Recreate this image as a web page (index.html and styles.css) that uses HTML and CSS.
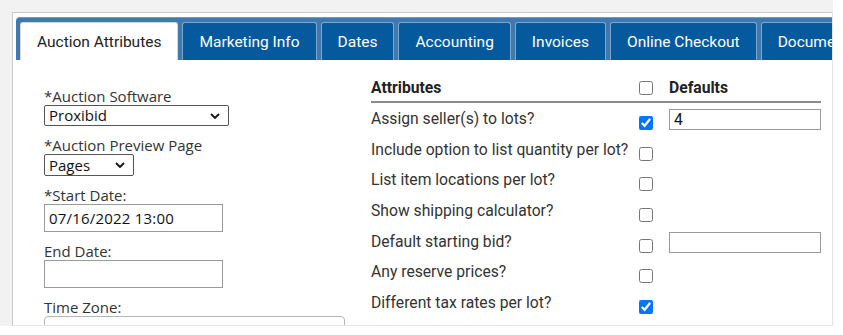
FILE: index.html
```html
<!DOCTYPE html>
<html lang="en">
<head>
<meta charset="utf-8">
<title>Auction Attributes</title>
<link rel="stylesheet" href="styles.css">
</head>
<body>
<div class="page">
  <div class="panel">
    <ul class="tabs">
      <li class="tab active">Auction Attributes</li>
      <li class="tab">Marketing Info</li>
      <li class="tab">Dates</li>
      <li class="tab">Accounting</li>
      <li class="tab">Invoices</li>
      <li class="tab">Online Checkout</li>
      <li class="tab">Documents</li>
    </ul>
    <div class="content">
      <div class="fields">
        <label class="lbl">*Auction Software</label>
        <span class="sel sel-software">
          <select><option>Proxibid</option></select>
          <svg class="chev" viewBox="0 0 10 6" width="10" height="6"><path d="M1 1l4 4 4-4" fill="none" stroke="#111" stroke-width="1.8"/></svg>
        </span>
        <label class="lbl">*Auction Preview Page</label>
        <span class="sel sel-pages">
          <select><option>Pages</option></select>
          <svg class="chev" viewBox="0 0 10 6" width="10" height="6"><path d="M1 1l4 4 4-4" fill="none" stroke="#111" stroke-width="1.8"/></svg>
        </span>
        <label class="lbl">*Start Date:</label>
        <input class="txt" type="text" value="07/16/2022 13:00">
        <label class="lbl">End Date:</label>
        <input class="txt" type="text" value="">
        <label class="lbl">Time Zone:</label>
        <div class="tz"></div>
      </div>
      <div class="attrs">
        <div class="row head">
          <span>Attributes</span>
          <input class="cb" type="checkbox">
          <span>Defaults</span>
        </div>
        <div class="row">
          <span class="q">Assign seller(s) to lots?</span>
          <input class="cb" type="checkbox" checked>
          <input class="def" type="text" value="4">
        </div>
        <div class="row">
          <span class="q">Include option to list quantity per lot?</span>
          <input class="cb" type="checkbox">
        </div>
        <div class="row">
          <span class="q">List item locations per lot?</span>
          <input class="cb" type="checkbox">
        </div>
        <div class="row">
          <span class="q">Show shipping calculator?</span>
          <input class="cb" type="checkbox">
        </div>
        <div class="row">
          <span class="q">Default starting bid?</span>
          <input class="cb" type="checkbox">
          <input class="def" type="text" value="">
        </div>
        <div class="row">
          <span class="q">Any reserve prices?</span>
          <input class="cb" type="checkbox">
        </div>
        <div class="row">
          <span class="q">Different tax rates per lot?</span>
          <input class="cb" type="checkbox" checked>
        </div>
      </div>
    </div>
  </div>
</div>
</body>
</html>
```
FILE: styles.css
```css
html, body {
  margin: 0;
  padding: 0;
  background: #fff;
}

.page {
  width: 833px;
  height: 326px;
  box-sizing: border-box;
  padding: 12px 0 0 12px;
  background: #f2f2f2;
}

.panel {
  height: 100%;
  box-sizing: border-box;
  background: #fff;
  border: 1px solid #c9c9c9;
  border-right-color: #e4e4e4;
  border-bottom-color: #e4e4e4;
  overflow: hidden;
}

.tabs {
  list-style: none;
  display: flex;
  gap: 4px;
  height: 43px;
  box-sizing: border-box;
  margin: 4px 0 0 3px;
  padding: 5px 0 0 4px;
  background: #3f79ad;
  border-top: 1px solid #6f9cc6;
  border-radius: 4px 0 0 0;
  overflow: hidden;
  font-family: Roboto, "Liberation Sans", sans-serif;
}

.tab {
  flex: none;
  display: flex;
  align-items: center;
  height: 38px;
  box-sizing: border-box;
  margin-top: -1px;
  padding: 0 16px;
  border: 1px solid #7fa7cc;
  border-bottom: 0;
  border-radius: 3px 3px 0 0;
  background: #045a9d;
  color: #fff;
  font-size: 15.5px;
}

.tab.active {
  background: #fff;
  color: #222;
  border-color: #d6d6d6;
}

.content {
  display: flex;
  align-items: flex-start;
  gap: 27px;
  padding-left: 31px;
}

.fields {
  width: 300px;
  flex: none;
  margin-top: 27px;
  display: flex;
  flex-direction: column;
  align-items: flex-start;
  font-family: "Open Sans", "Noto Sans", sans-serif;
  color: #333;
}

.lbl {
  display: block;
  font-size: 15px;
  line-height: 18px;
  margin-top: 10px;
}

.lbl:first-child {
  margin-top: 0;
}

.sel {
  position: relative;
  display: block;
}

.sel select {
  appearance: none;
  -webkit-appearance: none;
  display: block;
  margin: 0;
  padding: 0 0 0 4px;
  border: 1px solid #555;
  border-radius: 2px;
  background: #fff;
  color: #111;
  font-family: "Open Sans", "Noto Sans", sans-serif;
  font-size: 15px;
  box-sizing: border-box;
}

.sel-software select {
  width: 185px;
  height: 21px;
  line-height: 19px;
}

.sel-pages select {
  width: 90px;
  height: 22px;
  line-height: 20px;
}

.chev {
  position: absolute;
  right: 9px;
  top: 50%;
  margin-top: -3px;
}

.txt {
  display: block;
  width: 179px;
  height: 28px;
  box-sizing: border-box;
  margin: 0;
  padding: 0 4px;
  border: 1px solid #9a9a9a;
  border-radius: 0;
  font-family: "Open Sans", "Noto Sans", sans-serif;
  font-size: 15px;
  letter-spacing: 0.2px;
  color: #111;
}

.tz {
  width: 301px;
  height: 30px;
  box-sizing: border-box;
  border: 1px solid #b5b5b5;
  border-radius: 4px;
}

.attrs {
  margin-top: 14px;
  font-family: Roboto, "Liberation Sans", sans-serif;
  font-size: 15.7px;
  color: #333;
}

.row {
  display: grid;
  grid-template-columns: 268px 30px 152px;
  align-items: start;
  height: 30.67px;
}

.row.head {
  height: 29px;
  box-sizing: border-box;
  align-items: center;
  border-bottom: 2px solid #8c8c8c;
  font-weight: bold;
  color: #222;
}

.q {
  padding-top: 6px;
  line-height: 20px;
  white-space: nowrap;
}

.cb {
  width: 14px;
  height: 14px;
  margin: 13px 0 0 0;
}

.row.head .cb {
  margin: 0;
}

.def {
  width: 152px;
  height: 21px;
  box-sizing: border-box;
  margin: 6px 0 0 0;
  padding: 0 4px;
  border: 1px solid #999;
  font-family: Roboto, "Liberation Sans", sans-serif;
  font-size: 15.7px;
  color: #111;
}
```
